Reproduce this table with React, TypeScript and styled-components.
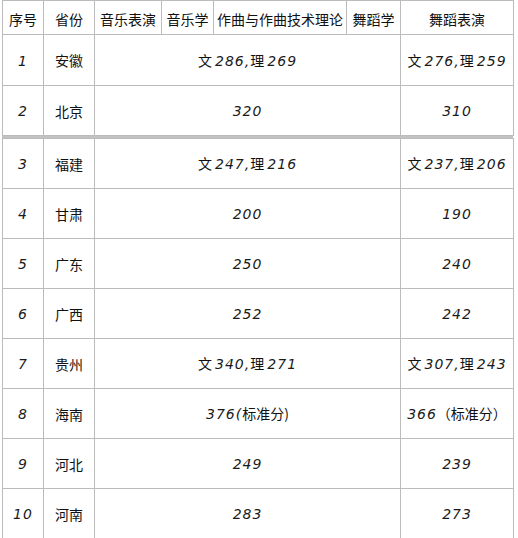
import React from "react";
import styled, { createGlobalStyle } from "styled-components";

// Types
interface Row {
  no: number;
  province: string;
  music: string;
  dance: string;
}

// Data
const topRows: Row[] = [
  { no: 1, province: "安徽", music: "文 286,理 269", dance: "文 276,理 259" },
  { no: 2, province: "北京", music: "320", dance: "310" },
];

const bottomRows: Row[] = [
  { no: 3, province: "福建", music: "文 247,理 216", dance: "文 237,理 206" },
  { no: 4, province: "甘肃", music: "200", dance: "190" },
  { no: 5, province: "广东", music: "250", dance: "240" },
  { no: 6, province: "广西", music: "252", dance: "242" },
  { no: 7, province: "贵州", music: "文 340,理 271", dance: "文 307,理 243" },
  { no: 8, province: "海南", music: "376(标准分)", dance: "366（标准分）" },
  { no: 9, province: "河北", music: "249", dance: "239" },
  { no: 10, province: "河南", music: "283", dance: "273" },
];

const widths = [41, 51, 67, 52, 133, 54, 113];

// Styles
const GlobalStyle = createGlobalStyle`
  html, body {
    margin: 0;
    padding: 0;
    background: #ffffff;
  }
  body {
    font-family: "Noto Sans CJK SC", "Noto Sans", sans-serif;
    color: #111;
  }
`;

const Page = styled.div`
  width: 518px;
  height: 538px;
  display: flex;
  flex-direction: column;
  overflow: hidden;
`;

const TopStrip = styled.div`
  height: 3px;
  display: flex;
`;

const TopTab = styled.div`
  margin-left: 190px;
  width: 87px;
  background: #cdcdcd;
`;

const Table = styled.table`
  margin-left: 2px;
  width: 511px;
  border-collapse: collapse;
  table-layout: fixed;
`;

const Cell = styled.td<{ $h: number }>`
  height: ${(p) => p.$h}px;
  padding: 0;
  border: 1px solid #bcbcbc;
  text-align: center;
  vertical-align: middle;
  font-size: 14px;
  line-height: 18px;
  white-space: nowrap;
  overflow: hidden;
`;

const HeadCell = styled(Cell)`
  padding-top: 3px;
`;

const Num = styled.span`
  font-family: "DejaVu Sans", sans-serif;
  font-style: oblique;
  font-size: 14px;
  letter-spacing: 1px;
  color: #1a1a1a;
`;

const Break = styled.div`
  margin-left: 2px;
  width: 511px;
  height: 9px;
  border-top: 1px solid #c2c2c2;
  border-bottom: 1px solid #c2c2c2;
  background: linear-gradient(#e4e4e4 0 4px, #f7f7f7 4px 100%);
  display: flex;
  justify-content: flex-end;
`;

const BreakTick = styled.div`
  width: 11px;
  border-left: 1px solid #b0b0b0;
`;

const Footer = styled.div`
  flex: 1;
  background: #e6e6e6;
`;

// Numbers and Chinese mixed: wrap digit runs in the script-like font
const Mixed = ({ text }: { text: string }) => {
  const parts = text.split(/([0-9,()]+)/).filter(Boolean);
  return (
    <>
      {parts.map((p, i) =>
        /[0-9]/.test(p) ? <Num key={i}>{p}</Num> : <span key={i}>{p}</span>
      )}
    </>
  );
};

const Cols = () => (
  <colgroup>
    {widths.map((w, i) => (
      <col key={i} style={{ width: w }} />
    ))}
  </colgroup>
);

const DataRow = ({ row, h }: { row: Row; h: number }) => (
  <tr>
    <Cell $h={h}>
      <Num>{row.no}</Num>
    </Cell>
    <Cell $h={h}>{row.province}</Cell>
    <Cell $h={h} colSpan={4}>
      <Mixed text={row.music} />
    </Cell>
    <Cell $h={h}>
      <Mixed text={row.dance} />
    </Cell>
  </tr>
);

const headers = ["序号", "省份", "音乐表演", "音乐学", "作曲与作曲技术理论", "舞蹈学", "舞蹈表演"];

export default function App() {
  return (
    <Page>
      <GlobalStyle />
      <TopStrip>
        <TopTab />
      </TopStrip>
      <Table>
        <Cols />
        <tbody>
          <tr>
            {headers.map((h) => (
              <HeadCell key={h} $h={30}>
                {h}
              </HeadCell>
            ))}
          </tr>
          <DataRow row={topRows[0]} h={50} />
          <DataRow row={topRows[1]} h={49} />
        </tbody>
      </Table>
      <Break>
        <BreakTick />
      </Break>
      <Table>
        <Cols />
        <tbody>
          {bottomRows.map((r) => (
            <DataRow key={r.no} row={r} h={49} />
          ))}
        </tbody>
      </Table>
      <Footer />
    </Page>
  );
}
